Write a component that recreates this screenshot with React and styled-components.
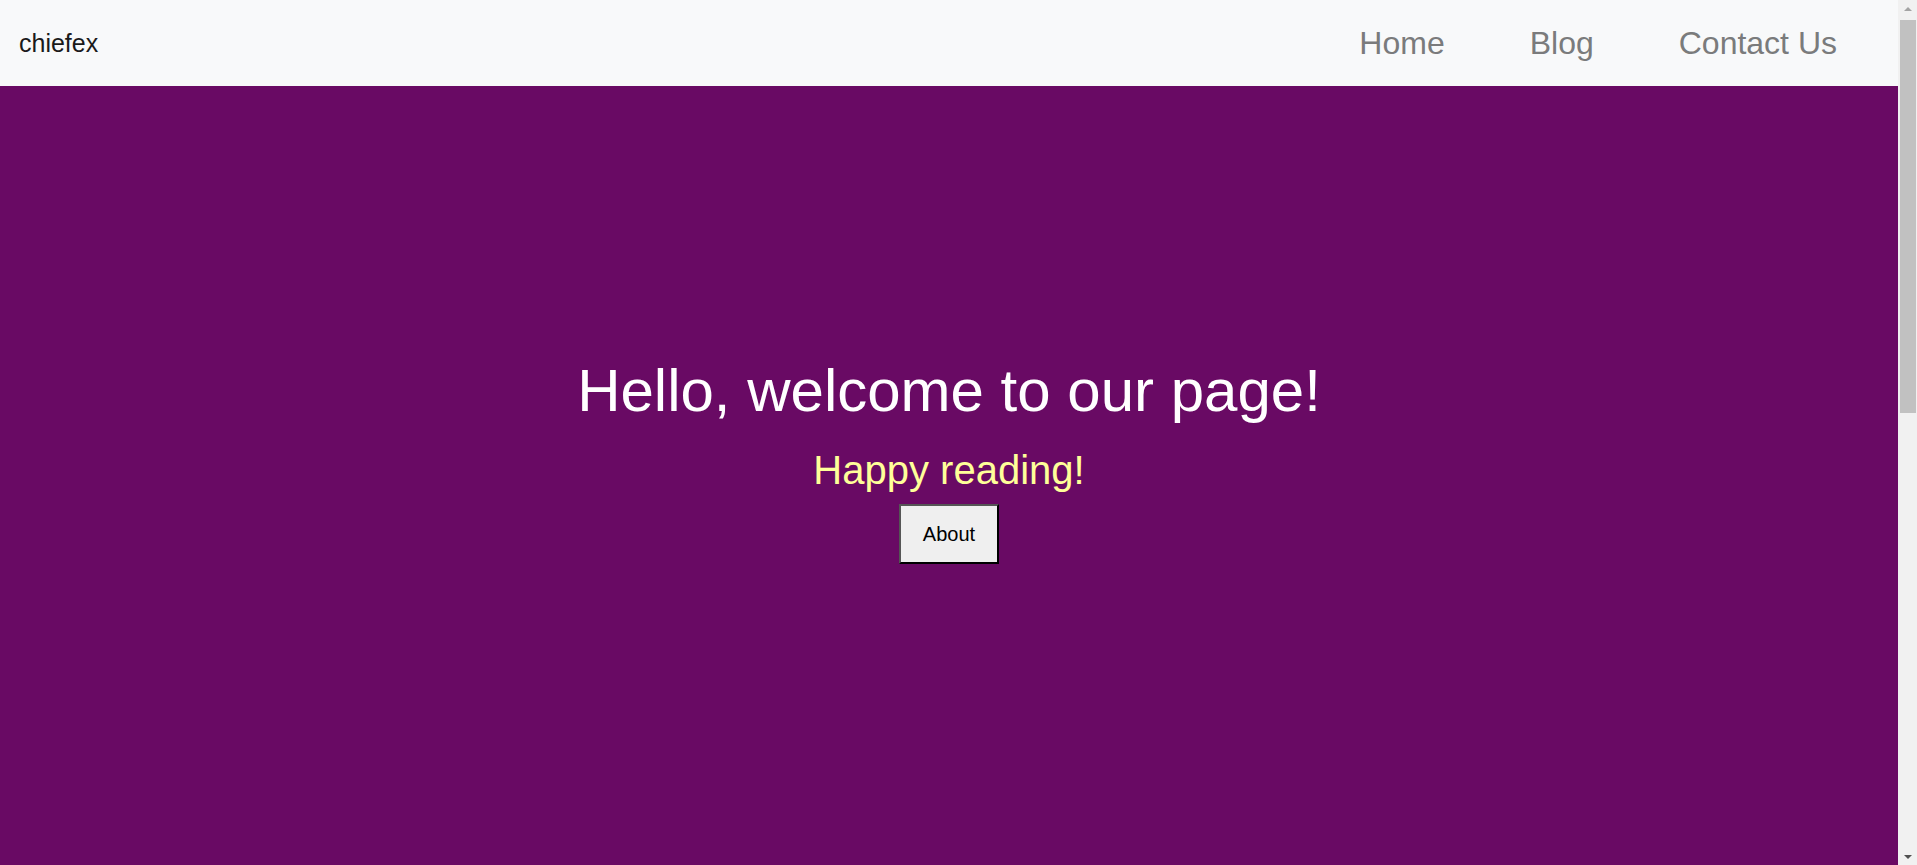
import React from "react";
import styled, { createGlobalStyle } from "styled-components";

const GlobalStyle = createGlobalStyle`
  body {
    margin: 0;
    font-family: "Liberation Sans", Arial, sans-serif;
  }
`;

const Frame = styled.div`
  display: flex;
  height: 100vh;
  overflow: hidden;
`;

const Page = styled.div`
  flex: 1;
  min-width: 0;
  display: flex;
  flex-direction: column;
`;

const Navbar = styled.nav`
  height: 86px;
  flex-shrink: 0;
  background: #f8f9fa;
  display: flex;
  align-items: center;
  justify-content: space-between;
  padding: 0 61px 0 19px;
`;

const Brand = styled.a`
  font-size: 25px;
  color: #1a1a1a;
  text-decoration: none;
`;

const NavLinks = styled.ul`
  display: flex;
  gap: 85px;
  list-style: none;
  margin: 0;
  padding: 0;
`;

const NavLink = styled.a`
  font-size: 32px;
  color: #7a7b7c;
  text-decoration: none;
`;

const Hero = styled.section`
  flex: 1;
  background: #690a64;
  padding-top: 270px;
  display: flex;
  flex-direction: column;
  align-items: center;
  text-align: center;
`;

const Title = styled.h1`
  margin: 0 0 23px;
  font-size: 60px;
  font-weight: normal;
  color: #ffffff;
`;

const Subtitle = styled.p`
  margin: 0 0 11px;
  font-size: 40px;
  color: #ffff99;
`;

const AboutButton = styled.button`
  width: 100px;
  height: 60px;
  padding: 0;
  font-family: "Liberation Sans", Arial, sans-serif;
  font-size: 20px;
  color: #000;
  background: #efefef;
  border: 2px solid;
  border-color: #555 #000 #000 #555;
  cursor: pointer;
`;

const ScrollRail = styled.div`
  width: 19px;
  flex-shrink: 0;
  background: #f1f1f1;
  display: flex;
  flex-direction: column;
`;

const ArrowButton = styled.div`
  height: 17px;
  display: flex;
  align-items: center;
  justify-content: center;
  padding-left: 1px;
`;

const Arrow = styled.span`
  width: 0;
  height: 0;
  border-left: 4px solid transparent;
  border-right: 4px solid transparent;
  ${({ $down }) =>
    $down
      ? "border-top: 4px solid #505050;"
      : "border-bottom: 4px solid #a3a3a3;"}
`;

const Track = styled.div`
  flex: 1;
  padding: 3px 1px 0 2px;
`;

const Thumb = styled.div`
  height: 393px;
  background: #c1c1c1;
`;

export default function App() {
  const links = ["Home", "Blog", "Contact Us"];
  return (
    <Frame>
      <GlobalStyle />
      <Page>
        <Navbar>
          <Brand href="#">chiefex</Brand>
          <NavLinks>
            {links.map((link) => (
              <li key={link}>
                <NavLink href="#">{link}</NavLink>
              </li>
            ))}
          </NavLinks>
        </Navbar>
        <Hero>
          <Title>Hello, welcome to our page!</Title>
          <Subtitle>Happy reading!</Subtitle>
          <AboutButton>About</AboutButton>
        </Hero>
      </Page>
      <ScrollRail>
        <ArrowButton>
          <Arrow />
        </ArrowButton>
        <Track>
          <Thumb />
        </Track>
        <ArrowButton>
          <Arrow $down />
        </ArrowButton>
      </ScrollRail>
    </Frame>
  );
}
